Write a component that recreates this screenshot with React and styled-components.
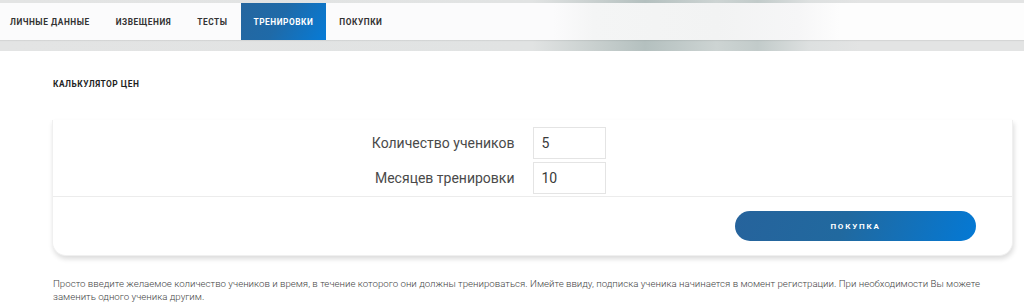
import styled, { createGlobalStyle } from "styled-components";

const GlobalStyle = createGlobalStyle`
  body {
    margin: 0;
    background: #ffffff;
    font-family: Roboto, "Liberation Sans", sans-serif;
  }
`;

const tabs = ["Личные данные", "Извещения", "Тесты", "Тренировки", "Покупки"];

export default function App() {
  return (
    <>
      <GlobalStyle />
      <Header>
        <Nav>
          {tabs.map((t) => (
            <Tab key={t} $active={t === "Тренировки"}>
              {t}
            </Tab>
          ))}
        </Nav>
      </Header>
      <Main>
        <Title>Калькулятор цен</Title>
        <Card>
          <Fields>
            <Label>Количество учеников</Label>
            <Input defaultValue="5" />
            <Label>Месяцев тренировки</Label>
            <Input defaultValue="10" />
          </Fields>
          <Footer>
            <BuyButton>Покупка</BuyButton>
          </Footer>
        </Card>
        <Note>
          Просто введите желаемое количество учеников и время, в течение
          которого они должны тренироваться. Имейте ввиду, подписка ученика
          начинается в момент регистрации. При необходимости Вы можете
          заменить одного ученика другим.
        </Note>
      </Main>
    </>
  );
}

const Header = styled.header`
  padding: 3px 0 11px;
  background: linear-gradient(
    to right,
    #e3e4e4 0%,
    #e1e3e3 52%,
    #c9d0cf 58%,
    #b4c0bf 63%,
    #cdd4d3 70%,
    #c2cbca 74%,
    #dde0e0 79%,
    #e3e4e4 84%,
    #e3e4e4 100%
  );
`;

const Nav = styled.nav`
  display: flex;
  height: 37px;
  background: linear-gradient(
    to right,
    #fbfbfc 0%,
    #fbfbfc 54%,
    #f4f5f5 58%,
    #f2f3f3 70%,
    #f6f6f7 78%,
    #fdfdfd 82%,
    #fdfdfd 100%
  );
  box-shadow: 0 1px 1px rgba(0, 0, 0, 0.06);
`;

const Tab = styled.div`
  display: flex;
  align-items: center;
  padding: 0 13px;
  font-size: 8.3px;
  font-weight: 700;
  letter-spacing: 0.55px;
  text-transform: uppercase;
  color: ${(p) => (p.$active ? "#ffffff" : "#333333")};
  background: ${(p) =>
    p.$active ? "linear-gradient(120deg, #25669f 0%, #1f6aa8 45%, #067bd7 100%)" : "transparent"};
  &:first-child {
    padding-left: 10px;
  }
`;

const Main = styled.main`
  padding: 0 11px 0 52px;
`;

const Title = styled.h2`
  margin: 28px 0 31px 1px;
  font-size: 8.4px;
  font-weight: 700;
  letter-spacing: 0.5px;
  text-transform: uppercase;
  color: #1f1f1f;
`;

const Card = styled.section`
  border: 1px solid #f0f0f0;
  border-top: none;
  border-radius: 0 0 14px 14px;
  box-shadow: 1px 3px 5px rgba(0, 0, 0, 0.14);
  background: #ffffff;
`;

const Fields = styled.div`
  display: grid;
  grid-template-columns: 1fr 1fr;
  row-gap: 3px;
  align-items: center;
  padding: 7px 0 2px;
  border-bottom: 1px solid #ececec;
`;

const Label = styled.label`
  justify-self: end;
  padding-right: 18px;
  font-size: 14px;
  color: #4a4a4a;
`;

const Input = styled.input`
  box-sizing: border-box;
  width: 73px;
  height: 32px;
  padding: 0 8px;
  border: 1px solid #e4e4e4;
  font-family: Roboto, "Liberation Sans", sans-serif;
  font-size: 14px;
  color: #3a3a3a;
  outline: none;
`;

const Footer = styled.div`
  display: flex;
  justify-content: flex-end;
  padding: 14px 36px 14px;
`;

const BuyButton = styled.button`
  width: 241px;
  height: 30px;
  border: none;
  border-radius: 15px;
  background: linear-gradient(110deg, #26639c 0%, #21699f 45%, #0479d5 100%);
  color: #ffffff;
  font-family: Roboto, "Liberation Sans", sans-serif;
  font-size: 8px;
  font-weight: 700;
  letter-spacing: 1.8px;
  text-transform: uppercase;
`;

const Note = styled.p`
  margin: 21px 0 0 1px;
  max-width: 955px;
  font-size: 9.7px;
  line-height: 13px;
  font-weight: 300;
  color: #444444;
`;
